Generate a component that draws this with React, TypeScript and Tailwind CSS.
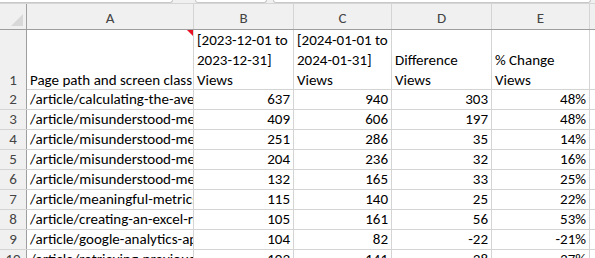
import React from 'react';

const font = { fontFamily: 'Calibri, Carlito, Lato, sans-serif' };

const cols = ['A', 'B', 'C', 'D', 'E'];

const rows = [
  ['/article/calculating-the-average', 637, 940, 303, '48%'],
  ['/article/misunderstood-metrics', 409, 606, 197, '48%'],
  ['/article/misunderstood-metrics', 251, 286, 35, '14%'],
  ['/article/misunderstood-metrics', 204, 236, 32, '16%'],
  ['/article/misunderstood-metrics', 132, 165, 33, '25%'],
  ['/article/meaningful-metrics', 115, 140, 25, '22%'],
  ['/article/creating-an-excel-report', 105, 161, 56, '53%'],
  ['/article/google-analytics-api', 104, 82, -22, '-21%'],
  ['/article/retrieving-previous', 103, 141, 38, '37%'],
];

const grid = 'grid grid-cols-[27px_167px_100px_98px_100px_98px_1fr]';

const App = () => {
  return (
    <div className="w-[595px] h-[258px] overflow-hidden bg-white text-black" style={font}>
      {/* formula bar edges */}
      <div className="flex h-[4px] bg-[#f0f0f0] border-b border-[#d6d6d6]">
        <div className="w-[173px] h-[3px] bg-white border-r border-b border-[#c8c8c8] rounded-br-[4px]" />
        <div className="ml-[22px] w-[72px] h-[3px] bg-white border border-t-0 border-[#c8c8c8] rounded-b-[4px]" />
        <div className="ml-[6px] w-[318px] h-[3px] bg-white border border-t-0 border-[#c8c8c8] rounded-b-[4px]" />
      </div>

      {/* column headers */}
      <div className={`${grid} h-[26px] bg-[#f0f0f0] border-b border-[#9e9e9e]`}>
        <div className="border-r border-[#9e9e9e] flex items-end justify-end pr-[3px] pb-[3px]">
          <div className="w-[12px] h-[12px] bg-[#d8d8d8] [clip-path:polygon(100%_0,100%_100%,0_100%)]" />
        </div>
        {cols.map((c) => (
          <div
            key={c}
            className="border-r border-[#d4d4d4] flex items-end justify-center pb-[1px] text-[15px] leading-[20px] text-[#444]"
          >
            {c}
          </div>
        ))}
        <div />
      </div>

      {/* row 1 */}
      <div className={`${grid} h-[60px] border-b border-[#d4d4d4] text-[15px] leading-[20px]`}>
        <div className="bg-[#f0f0f0] border-r border-[#9e9e9e] flex items-end justify-center text-[#444]">1</div>
        <div className="relative border-r border-[#d4d4d4] flex items-end pl-[3px] overflow-hidden whitespace-nowrap">
          Page path and screen class
          <div className="absolute top-0 right-0 w-[6px] h-[6px] bg-[#e81123] [clip-path:polygon(0_0,100%_0,100%_100%)]" />
        </div>
        <div className="border-r border-[#d4d4d4] flex flex-col justify-end pl-[3px] whitespace-nowrap">
          <span>[2023-12-01 to</span>
          <span>2023-12-31]</span>
          <span>Views</span>
        </div>
        <div className="border-r border-[#d4d4d4] flex flex-col justify-end pl-[3px] whitespace-nowrap">
          <span>[2024-01-01 to</span>
          <span>2024-01-31]</span>
          <span>Views</span>
        </div>
        <div className="border-r border-[#d4d4d4] flex flex-col justify-end pl-[3px] whitespace-nowrap">
          <span>Difference</span>
          <span>Views</span>
        </div>
        <div className="border-r border-[#d4d4d4] flex flex-col justify-end pl-[3px] whitespace-nowrap">
          <span>% Change</span>
          <span>Views</span>
        </div>
        <div />
      </div>

      {/* data rows */}
      {rows.map((r, i) => (
        <div key={i} className={`${grid} h-[20px] border-b border-[#d4d4d4] text-[15px] leading-[19px]`}>
          <div className="bg-[#f0f0f0] border-r border-[#9e9e9e] text-center text-[#444]">{i + 2}</div>
          <div className="border-r border-[#d4d4d4] pl-[3px] overflow-hidden whitespace-nowrap">{r[0]}</div>
          {r.slice(1).map((v, j) => (
            <div key={j} className="border-r border-[#d4d4d4] pr-[3px] text-right">
              {v}
            </div>
          ))}
          <div />
        </div>
      ))}
    </div>
  );
};

export default App;
